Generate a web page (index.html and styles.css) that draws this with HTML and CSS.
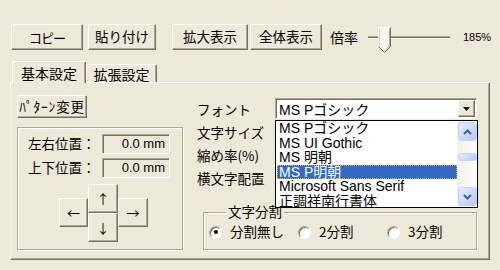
FILE: index.html
```html
<html lang="ja">
<head>
    <meta charset="UTF-8">
    <meta name="viewport" content="width=device-width, initial-scale=1.0">
    <title>パターン設定</title>
    <link rel="stylesheet" href="styles.css">
</head>
<body>
    <!-- Toolbar: clipboard, view buttons and zoom slider -->
    <div class="toolbar">
        <button class="btn btn-copy">コピー</button>
        <button class="btn btn-paste">貼り付け</button>
        <button class="btn btn-zoom">拡大表示</button>
        <button class="btn btn-fit">全体表示</button>
        <span class="zoom-label">倍率</span>
        <div class="slider">
            <div class="slider-track"></div>
            <svg class="slider-thumb" width="13" height="26" viewBox="0 0 13 26">
                <path d="M0.5 0.5 H12.5 V19.5 L6.5 25.5 L0.5 19.5 Z" fill="#f7f6f0"/>
                <path d="M0.5 19.5 V0.5 H12" fill="none" stroke="#fff"/>
                <path d="M1.5 19.5 V1.5" fill="none" stroke="#d8d5c7"/>
                <path d="M12.5 0.5 V19.5 L6.5 25.5 L0.5 19.5" fill="none" stroke="#716f64"/>
                <path d="M11.5 1.5 V19 L6.5 24" fill="none" stroke="#aca899"/>
            </svg>
        </div>
        <span class="zoom-value">185%</span>
    </div>

    <!-- Tabs -->
    <div class="tabs">
        <div class="tab tab-active">基本設定</div>
        <div class="tab">拡張設定</div>
    </div>

    <div class="panel">
        <div class="col-left">
            <button class="btn btn-pattern">ﾊﾟﾀｰﾝ変更</button>
            <div class="groupbox pos-box">
                <div class="pos-row">
                    <span class="pos-label">左右位置：</span>
                    <div class="field">0.0 mm</div>
                </div>
                <div class="pos-row">
                    <span class="pos-label">上下位置：</span>
                    <div class="field">0.0 mm</div>
                </div>
                <div class="arrow-pad">
                    <button class="btn arrow arrow-up">↑</button>
                    <button class="btn arrow arrow-left">←</button>
                    <button class="btn arrow arrow-right">→</button>
                    <button class="btn arrow arrow-down">↓</button>
                </div>
            </div>
        </div>

        <div class="col-right">
            <div class="settings">
                <div class="combo-wrap">
                    <div class="combo">
                        <span class="combo-text">MS Pゴシック</span>
                        <span class="combo-btn">
                            <svg width="7" height="4" viewBox="0 0 7 4"><path d="M0 0 H7 L3.5 4 Z" fill="#000"/></svg>
                        </span>
                    </div>
                    <!-- open font list -->
                    <div class="dropdown">
                        <ul class="dropdown-items">
                            <li>MS Pゴシック</li>
                            <li>MS UI Gothic</li>
                            <li>MS 明朝</li>
                            <li class="selected">MS P明朝</li>
                            <li>Microsoft Sans Serif</li>
                            <li>正調祥南行書体</li>
                        </ul>
                        <div class="scrollbar">
                            <span class="sb-btn">
                                <svg width="9" height="6" viewBox="0 0 9 6"><path d="M1 5 L4.5 1.5 L8 5" fill="none" stroke="#4d6185" stroke-width="2"/></svg>
                            </span>
                            <span class="sb-thumb"></span>
                            <span class="sb-btn sb-down">
                                <svg width="9" height="6" viewBox="0 0 9 6"><path d="M1 1 L4.5 4.5 L8 1" fill="none" stroke="#4d6185" stroke-width="2"/></svg>
                            </span>
                        </div>
                    </div>
                </div>
                <span class="set-label">フォント</span>
                <span class="set-label">文字サイズ</span>
                <span class="set-label">縮め率(%)</span>
                <span class="set-label">横文字配置</span>
            </div>

            <div class="groupbox split-box">
                <span class="split-title">文字分割</span>
                <div class="radio-row">
                    <label class="radio-opt"><span class="radio checked"></span>分割無し</label>
                    <label class="radio-opt"><span class="radio"></span>2分割</label>
                    <label class="radio-opt"><span class="radio"></span>3分割</label>
                </div>
            </div>
        </div>
    </div>
</body>
</html>
```

FILE: styles.css
```css
body {
    margin: 0;
    width: 500px;
    height: 270px;
    overflow: hidden;
    background-color: #ece9d8;
    color: #000;
    font: 13.5px/1 "Noto Sans CJK JP", sans-serif;
}

/* classic raised button */
.btn {
    box-sizing: border-box;
    height: 26px;
    margin: 0;
    padding: 0;
    background-color: #ece9d8;
    color: #000;
    border: 1px solid;
    border-color: #fff #716f64 #716f64 #fff;
    box-shadow: inset -1px -1px 0 #aca899;
    font: 13.5px/1 "Noto Sans CJK JP", sans-serif;
}

/* toolbar */
.toolbar {
    display: flex;
    align-items: center;
    height: 26px;
    padding: 24px 0 0 11px;
}

.btn-copy {
    width: 72px;
    font-size: 13px;
    letter-spacing: -1px;
}

.btn-paste {
    width: 68px;
    margin-left: 5px;
}

.btn-zoom {
    width: 76px;
    margin-left: 16px;
}

.btn-fit {
    width: 72px;
    margin-left: 2px;
}

.zoom-label {
    margin-left: 8px;
    font-size: 14px;
}

.slider {
    position: relative;
    width: 82px;
    height: 26px;
    margin-left: 10px;
}

.slider-track {
    height: 1px;
    margin-top: 12px;
    background-color: #716f64;
    border-top: 1px solid #aca899;
    border-bottom: 1px solid #fff;
}

.slider-thumb {
    position: absolute;
    left: 10px;
    top: 3px;
}

.zoom-value {
    margin-left: 13px;
    font: 11px "Liberation Sans", sans-serif;
}

/* tabs */
.tabs {
    display: flex;
    align-items: flex-end;
    height: 21px;
    margin-top: 11px;
    padding-left: 12px;
    font-size: 14px;
}

.tab {
    box-sizing: border-box;
    width: 71px;
    height: 18px;
    display: flex;
    align-items: center;
    justify-content: center;
    border: 1px solid;
    border-bottom: none;
    border-color: #fff #716f64 transparent #fff;
    border-radius: 2px 2px 0 0;
    box-shadow: inset -1px 0 0 #aca899;
}

.tab-active {
    position: relative;
    z-index: 1;
    width: 74px;
    height: 22px;
    margin-bottom: -1px;
    background-color: #ece9d8;
}

/* tab page */
.panel {
    box-sizing: border-box;
    height: 178px;
    margin: 0 10px;
    padding: 12px 0 0 6px;
    display: grid;
    grid-template-columns: 166px 281px;
    column-gap: 14px;
    align-items: start;
    border: 1px solid;
    border-color: #fff #716f64 #716f64 #fff;
    box-shadow: inset -1px -1px 0 #aca899;
}

.btn-pattern {
    display: block;
    width: 70px;
    height: 23px;
    letter-spacing: 0.8px;
}

.groupbox {
    box-sizing: border-box;
    border: 1px solid #aca899;
    box-shadow: inset 1px 1px 0 #fff, 1px 1px 0 #fff;
}

.pos-box {
    height: 123px;
    margin-top: 9px;
    padding: 6px 0 0 10px;
}

.pos-row {
    display: flex;
    align-items: center;
    height: 20px;
}

.pos-row + .pos-row {
    margin-top: 4px;
}

.pos-label {
    width: 74px;
}

.field {
    box-sizing: border-box;
    width: 68px;
    height: 20px;
    padding-right: 4px;
    text-align: right;
    border: 1px solid;
    border-color: #aca899 #fff #fff #aca899;
    box-shadow: inset 1px 1px 0 #716f64;
    font: 13px/18px "Liberation Sans", sans-serif;
}

.arrow-pad {
    display: grid;
    grid-template-columns: 29px 30px 30px;
    grid-template-rows: 14px 15px 14px 15px;
    width: max-content;
    margin: 6px 0 0 31px;
}

.arrow {
    width: 100%;
    height: 100%;
    font: 13px/1 "Noto Sans CJK JP", sans-serif;
}

.arrow-up {
    grid-column: 2;
    grid-row: 1 / 3;
}

.arrow-left {
    grid-column: 1;
    grid-row: 2 / 4;
}

.arrow-right {
    grid-column: 3;
    grid-row: 2 / 4;
}

.arrow-down {
    grid-column: 2;
    grid-row: 3 / 5;
}

/* right column */
.col-right {
    padding-top: 3px;
}

.settings {
    display: grid;
    grid-template-columns: 78px 203px;
    grid-auto-rows: 23px;
}

.set-label {
    grid-column: 1;
    align-self: center;
}

.combo-wrap {
    position: relative;
    grid-column: 2;
    grid-row: 1;
}

.combo {
    box-sizing: border-box;
    width: 202px;
    height: 21px;
    display: flex;
    align-items: center;
    background-color: #fff;
    border: 1px solid;
    border-color: #aca899 #fff #fff #aca899;
    box-shadow: inset 1px 1px 0 #716f64;
}

.combo-text {
    flex: 1;
    padding-left: 3px;
    font: 14px "Liberation Sans", "Noto Sans CJK JP", sans-serif;
}

.combo-btn {
    box-sizing: border-box;
    width: 17px;
    height: 17px;
    margin-right: 1px;
    display: flex;
    align-items: center;
    justify-content: center;
    background-color: #ece9d8;
    border: 1px solid;
    border-color: #fff #716f64 #716f64 #fff;
    box-shadow: inset -1px -1px 0 #aca899;
}

.dropdown {
    position: absolute;
    z-index: 2;
    top: 22px;
    left: 0;
    box-sizing: border-box;
    width: 203px;
    height: 88px;
    display: flex;
    overflow: hidden;
    background-color: #fff;
    border: 1px solid #000;
}

.dropdown-items {
    flex: 1;
    margin: 0;
    padding: 0 0 0 1px;
    list-style: none;
}

.dropdown-items li {
    height: 14.5px;
    padding-left: 2px;
    white-space: nowrap;
    font: 14px/14.5px "Liberation Sans", "Noto Sans CJK JP", sans-serif;
}

.dropdown-items .selected {
    background-color: #316ac5;
    color: #fff;
    outline: 1px dotted #e8a33d;
    outline-offset: -1px;
}

.scrollbar {
    box-sizing: border-box;
    width: 20px;
    padding: 1px 0 1px 1px;
    display: flex;
    flex-direction: column;
    background: linear-gradient(to right, #f3f1ea, #fefefb);
}

.sb-btn,
.sb-thumb {
    box-sizing: border-box;
    border: 1px solid #c3d3fd;
    border-radius: 3px;
    background: linear-gradient(135deg, #e6eefe, #c6d7fb 60%, #b5c9f7);
}

.sb-btn {
    height: 19px;
    display: flex;
    align-items: center;
    justify-content: center;
}

.sb-thumb {
    height: 8px;
    margin-top: 12px;
}

.sb-down {
    margin-top: auto;
}

/* split group */
.split-box {
    position: relative;
    width: 274px;
    height: 38px;
    margin: 22px 0 0 6px;
    padding: 9px 0 0 5px;
}

.split-title {
    position: absolute;
    top: -8px;
    left: 22px;
    padding: 0 2px;
    background-color: #ece9d8;
}

.radio-row {
    display: flex;
}

.radio-opt {
    display: flex;
    align-items: center;
    width: 91px;
    height: 20px;
}

.radio {
    box-sizing: border-box;
    width: 13px;
    height: 13px;
    margin-right: 8px;
    display: flex;
    align-items: center;
    justify-content: center;
    border-radius: 50%;
    border: 1px solid;
    border-color: #aca899 #fff #fff #aca899;
    box-shadow: inset 1px 1px 0 #716f64;
    background-color: #fff;
}

.radio.checked::after {
    content: "";
    width: 4px;
    height: 4px;
    border-radius: 50%;
    background-color: #000;
}
```
